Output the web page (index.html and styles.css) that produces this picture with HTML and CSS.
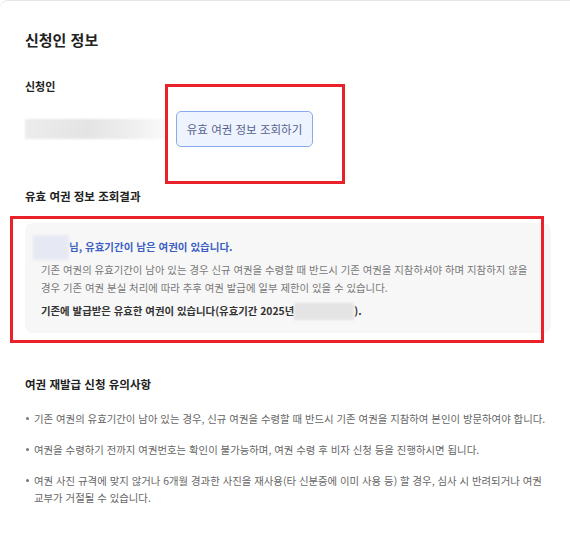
FILE: index.html
```html
<!DOCTYPE html>
<html lang="ko">
<head>
<meta charset="utf-8">
<link rel="stylesheet" href="styles.css">
</head>
<body>
<div class="card">
  <h1 class="title">신청인 정보</h1>
  <div class="label">신청인</div>
  <div class="applicant-row">
    <div class="blur-name"></div>
    <button class="lookup-btn" type="button">유효 여권 정보 조회하기</button>
  </div>
  <h2 class="heading result-heading">유효 여권 정보 조회결과</h2>
  <div class="result-box">
    <p class="result-title"><span class="blur-inline"></span>님, 유효기간이 남은 여권이 있습니다.</p>
    <p class="result-desc">기존 여권의 유효기간이 남아 있는 경우 신규 여권을 수령할 때 반드시 기존 여권을 지참하셔야 하며 지참하지 않을 경우 기존 여권 분실 처리에 따라 추후 여권 발급에 일부 제한이 있을 수 있습니다.</p>
    <p class="result-strong">기존에 발급받은 유효한 여권이 있습니다(유효기간 2025년<span class="blur-date"></span>).</p>
  </div>
  <h2 class="heading notice-heading">여권 재발급 신청 유의사항</h2>
  <ul class="notice-list">
    <li>기존 여권의 유효기간이 남아 있는 경우, 신규 여권을 수령할 때 반드시 기존 여권을 지참하여 본인이 방문하여야 합니다.</li>
    <li>여권을 수령하기 전까지 여권번호는 확인이 불가능하며, 여권 수령 후 비자 신청 등을 진행하시면 됩니다.</li>
    <li>여권 사진 규격에 맞지 않거나 6개월 경과한 사진을 재사용(타 신분증에 이미 사용 등) 할 경우, 심사 시 반려되거나 여권 교부가 거절될 수 있습니다.</li>
  </ul>
</div>
<div class="mark mark-btn"></div>
<div class="mark mark-result"></div>
</body>
</html>
```
FILE: styles.css
```css
* { box-sizing: border-box; }
html, body { margin: 0; padding: 0; background: #fff; }
body {
  font-family: "Noto Sans CJK KR", "Noto Sans", sans-serif;
  color: #222;
  width: 570px;
  height: 545px;
  overflow: hidden;
  position: relative;
}
.card {
  width: 570px;
  height: 545px;
  border-top: 1px solid #e6e6e6;
  border-top-left-radius: 8px;
  padding: 0 0 0 25px;
}
.title {
  margin: 28px 0 0;
  font-size: 15px;
  font-weight: 700;
  line-height: 22px;
  color: #222;
}
.label {
  margin-top: 27px;
  font-size: 11px;
  font-weight: 700;
  line-height: 16px;
  color: #222;
}
.applicant-row {
  display: flex;
  align-items: center;
  margin-top: 17px;
  height: 36px;
}
.blur-name {
  width: 140px;
  height: 20px;
  background: linear-gradient(90deg, #ececec 0%, #e4e4e4 45%, #eeeeee 75%, #fafafa 100%);
  filter: blur(1px);
}
.lookup-btn {
  margin-left: 11px;
  width: 137px;
  height: 36px;
  border: 1px solid #86acef;
  border-radius: 5px;
  background: #eef4ff;
  color: #55618c;
  font-family: inherit;
  font-size: 11.5px;
  padding: 0;
  cursor: pointer;
}
.heading {
  font-size: 11.5px;
  font-weight: 700;
  line-height: 16px;
  color: #222;
  margin: 0;
}
.result-heading { margin-top: 41px; }
.result-box {
  margin-top: 19px;
  width: 526px;
  background: #f7f7f7;
  border-radius: 8px;
  padding: 11px 14px 13px 16px;
}
.result-box p { margin: 0; }
.result-title {
  display: flex;
  align-items: center;
  font-size: 10.5px;
  font-weight: 700;
  color: #3d5fc4;
  line-height: 26px;
  margin-left: -8px !important;
}
.blur-inline {
  display: inline-block;
  width: 36px;
  height: 25px;
  background: #e6e9f3;
  filter: blur(1.5px);
}
.result-desc {
  font-size: 10.4px;
  line-height: 18px;
  color: #777;
  margin-top: 1px !important;
}
.result-strong {
  margin-top: 5px !important;
  font-size: 10.4px;
  font-weight: 700;
  line-height: 18px;
  color: #333;
  display: flex;
  align-items: center;
}
.blur-date {
  display: inline-block;
  width: 60px;
  height: 17px;
  background: #e4e4e4;
  filter: blur(1px);
}
.notice-heading { margin-top: 43px; }
.notice-list {
  list-style: none;
  margin: 18px 0 0;
  padding: 0;
  width: 522px;
}
.notice-list li {
  position: relative;
  padding-left: 9px;
  font-size: 10.4px;
  line-height: 17px;
  color: #666;
  margin-bottom: 14px;
}
.notice-list li::before {
  content: "";
  position: absolute;
  left: 1px;
  top: 7px;
  width: 3px;
  height: 3px;
  border-radius: 50%;
  background: #777;
}
.mark {
  position: absolute;
  border: 3px solid #e8212b;
  pointer-events: none;
}
.mark-btn { left: 165px; top: 84px; width: 180px; height: 100px; }
.mark-result { left: 10px; top: 216px; width: 534px; height: 127px; }
```
